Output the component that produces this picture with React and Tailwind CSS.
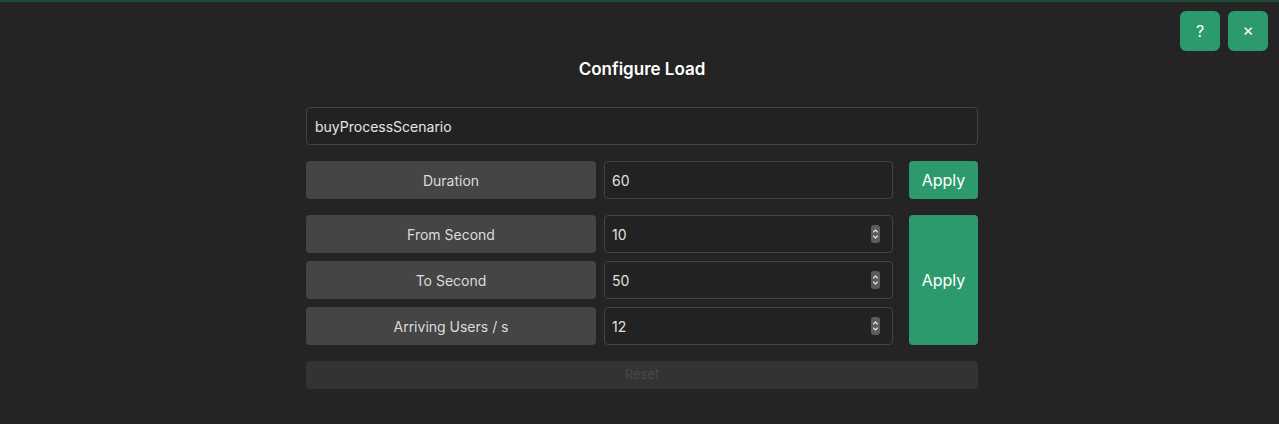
import React, { useState } from 'react';

const Spinner = () => (
  <div className="absolute right-[12px] top-1/2 -translate-y-1/2 w-[9px] h-[18px] rounded-[3px] bg-[#5c5c5c] flex items-center justify-center">
    <svg width="7" height="14" viewBox="0 0 7 14" fill="none" stroke="#e6e6e6" strokeWidth="1.1" strokeLinecap="round" strokeLinejoin="round">
      <path d="M1.5 5 L3.5 3 L5.5 5" />
      <path d="M1.5 9 L3.5 11 L5.5 9" />
    </svg>
  </div>
);

const Label = ({ children }) => (
  <div className="w-[290px] h-[38px] rounded-[4px] bg-[#454545] text-[#dcdcdc] text-[14px] flex items-center justify-center">
    {children}
  </div>
);

const Field = ({ value, spin }) => (
  <div className="relative w-[289px] h-[38px] rounded-[4px] border border-[#434343] bg-[#222222] text-[#e0e0e0] text-[14px] flex items-center px-[7px]">
    {value}
    {spin && <Spinner />}
  </div>
);

export default function App() {
  const [scenario] = useState('buyProcessScenario');

  return (
    <div className="min-h-[424px] w-full bg-[#242424] font-['Inter','Liberation_Sans',sans-serif] border-t-2 border-[#1d4a34] relative">
      <div className="absolute top-[9px] right-[11px] flex gap-[8px]">
        <button className="w-[40px] h-[40px] rounded-[6px] bg-[#2d9a6e] text-white text-[16px] flex items-center justify-center">?</button>
        <button className="w-[40px] h-[40px] rounded-[6px] bg-[#2d9a6e] text-white text-[17px] flex items-center justify-center">×</button>
      </div>

      <div className="w-[672px] ml-[306px] pt-[57px]">
        <h1 className="text-center text-white text-[17px] font-semibold leading-[20px]">Configure Load</h1>

        <div className="mt-[28px] h-[38px] rounded-[4px] border border-[#434343] bg-[#222222] text-[#e6e6e6] text-[14px] flex items-center px-[8px]">
          {scenario}
        </div>

        <div className="mt-[16px] flex items-center">
          <Label>Duration</Label>
          <div className="ml-[8px]"><Field value="60" /></div>
          <button className="ml-[16px] w-[69px] h-[38px] rounded-[4px] bg-[#2d9a6e] text-white text-[16px]">Apply</button>
        </div>

        <div className="mt-[16px] flex">
          <div className="flex flex-col gap-[8px]">
            <div className="flex gap-[8px]"><Label>From Second</Label><Field value="10" spin /></div>
            <div className="flex gap-[8px]"><Label>To Second</Label><Field value="50" spin /></div>
            <div className="flex gap-[8px]"><Label>Arriving Users / s</Label><Field value="12" spin /></div>
          </div>
          <button className="ml-[16px] w-[69px] h-[130px] rounded-[4px] bg-[#2d9a6e] text-white text-[16px]">Apply</button>
        </div>

        <button disabled className="mt-[16px] w-full h-[28px] rounded-[4px] bg-[#333333] text-[#4a4a4a] text-[13px]">Reset</button>
      </div>
    </div>
  );
}
